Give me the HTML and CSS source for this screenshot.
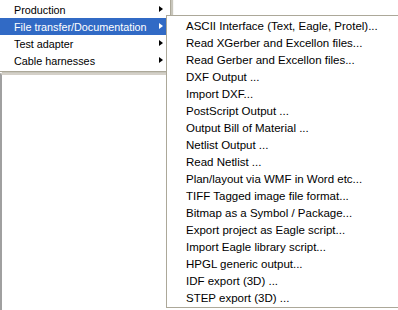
FILE: index.html
```html
<!DOCTYPE html>
<html>
<head>
    <title>Menu</title>
    <link rel="stylesheet" href="styles.css">
</head>
<body>
    <div class="screen">
        <div class="main-menu">
            <div class="item">Production<span class="arrow"></span></div>
            <div class="item active">File transfer/Documentation<span class="arrow"></span></div>
            <div class="item">Test adapter<span class="arrow"></span></div>
            <div class="item">Cable harnesses<span class="arrow"></span></div>
        </div>
        <div class="window"></div>

        <div class="sub-menu">
            <div class="item">ASCII Interface (Text, Eagle, Protel)...</div>
            <div class="item">Read XGerber and Excellon files...</div>
            <div class="item">Read Gerber and Excellon files...</div>
            <div class="item">DXF Output ...</div>
            <div class="item">Import DXF...</div>
            <div class="item">PostScript Output ...</div>
            <div class="item">Output Bill of Material ...</div>
            <div class="item">Netlist Output ...</div>
            <div class="item">Read Netlist ...</div>
            <div class="item">Plan/layout via WMF in Word etc...</div>
            <div class="item">TIFF Tagged image file format...</div>
            <div class="item">Bitmap as a Symbol / Package...</div>
            <div class="item">Export project as Eagle script...</div>
            <div class="item">Import Eagle library script...</div>
            <div class="item">HPGL generic output...</div>
            <div class="item">IDF export (3D) ...</div>
            <div class="item">STEP export (3D) ...</div>
        </div>
    </div>
</body>
</html>
```

FILE: styles.css
```css
body {
    margin: 0;
    background: #fff;
    font-family: 'Liberation Sans', Arial, sans-serif;
    font-size: 11.5px;
    color: #000;
    overflow: hidden;
}
.screen {
    position: relative;
    width: 398px;
    height: 310px;
    overflow: hidden;
}
.main-menu {
    width: 170px;
    margin-top: -2px;
    padding: 2px 0;
    background: #fff;
    border: 1px solid #aca899;
    border-left: none;
    box-shadow: 2px 2px 1px #c8c6bc;
    font-size: 10.8px;
}
.main-menu .item {
    position: relative;
    height: 17px;
    line-height: 19px;
    padding-left: 14px;
    white-space: nowrap;
}
.main-menu .item.active {
    background: #316ac5;
    color: #fff;
}
.arrow {
    position: absolute;
    left: 159px;
    top: 5px;
    width: 0;
    height: 0;
    border-top: 3.5px solid transparent;
    border-bottom: 3.5px solid transparent;
    border-left: 4px solid #000;
}
.item.active .arrow {
    border-left-color: #fff;
}
.window {
    height: 240px;
    margin-top: 1px;
    border-top: 2px solid #d4d0c8;
    border-left: 2px solid #a0a0a0;
}
.sub-menu {
    position: absolute;
    left: 166px;
    top: 15px;
    width: 260px;
    padding: 1px 0;
    background: #fff;
    border: 1px solid #aca899;
}
.sub-menu .item {
    height: 17px;
    line-height: 19px;
    padding-left: 19px;
    white-space: nowrap;
}
```
